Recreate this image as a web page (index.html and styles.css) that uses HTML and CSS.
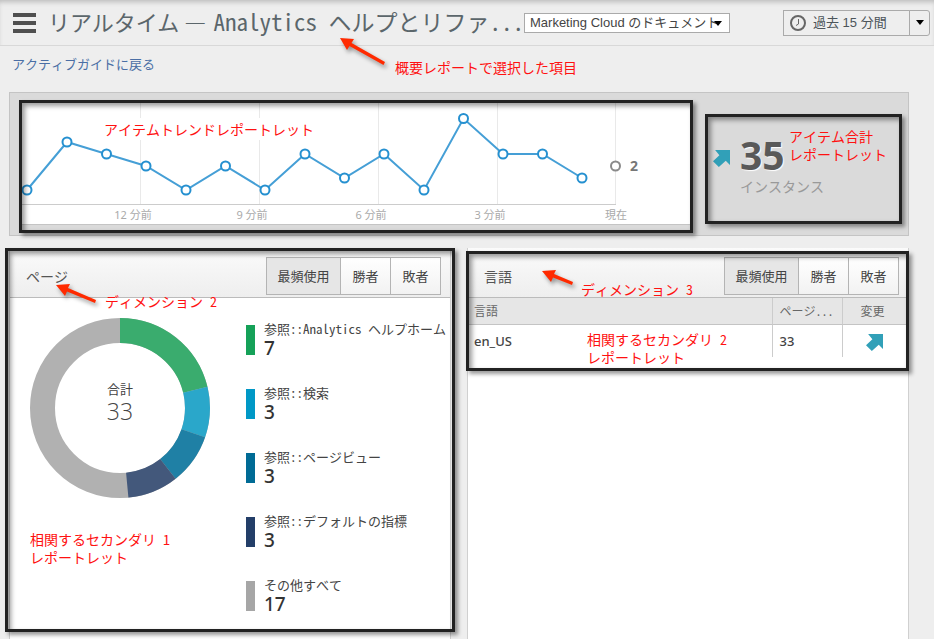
FILE: index.html
```html
<!DOCTYPE html>
<html lang="ja">
<head>
<meta charset="utf-8">
<title>リアルタイム — Analytics</title>
<link rel="stylesheet" href="styles.css">
</head>
<body>
<svg class="defs" aria-hidden="true">
  <symbol id="up" viewBox="0 0 16 16"><path d="M2 0H16V14L12 10 5.500 16 0 10.500 6 5Z"/></symbol>
</svg>
<header class="topbar">
  <button class="menu" type="button" aria-label="メニュー"><span></span><span></span><span></span></button>
  <h1 class="title"><span class="section">リアルタイム —</span><span class="item">Analytics ヘルプとリファ...</span></h1>
  <div class="picker">
    <select aria-label="レポート"><option>Marketing Cloud のドキュメント</option></select>
    <svg class="caret" viewBox="0 0 8 5"><path d="M0 0H8L4 5Z"/></svg>
  </div>
  <div class="period">
    <button class="period-main" type="button">
      <svg class="clock" viewBox="0 0 16 16"><circle cx="8" cy="8" r="7"/><path d="M8.500 4V9L6 10.500"/></svg>過去 15 分間
    </button>
    <button class="period-more" type="button" aria-label="期間を選択"><svg viewBox="0 0 8 5"><path d="M0 0H8L4 5Z"/></svg></button>
  </div>
  <svg class="pointer pointer-title" viewBox="0 0 46 28"><path d="M0 0L14 1 11.500 5 45 24 43.500 27 9.500 8 7 12Z"/></svg>
  <p class="note note-title">概要レポートで選択した項目</p>
</header>
<nav class="back"><a href="#">アクティブガイドに戻る</a></nav>
<main>
  <section class="summary">
    <div class="trend">
      <svg class="chart" viewBox="0 0 668 121" role="img" aria-label="アイテムトレンド">
        <path class="grid" d="M118.500 0V101M237.500 0V101M356.500 0V101M475.500 0V101M593.500 0V101"/>
        <path class="axis" d="M0 101.500H594"/>
        <path class="line" d="M5 87L45 39 84.500 51 124 63 164 87 203.500 63 243 87 283 51 322.500 75 362 51 402 87 441.500 15.500 481 51 520.500 51 560 75"/>
        <g class="dots">
          <circle cx="5" cy="87" r="4.500"/><circle cx="45" cy="39" r="4.500"/><circle cx="84.500" cy="51" r="4.500"/><circle cx="124" cy="63" r="4.500"/><circle cx="164" cy="87" r="4.500"/><circle cx="203.500" cy="63" r="4.500"/><circle cx="243" cy="87" r="4.500"/><circle cx="283" cy="51" r="4.500"/><circle cx="322.500" cy="75" r="4.500"/><circle cx="362" cy="51" r="4.500"/><circle cx="402" cy="87" r="4.500"/><circle cx="441.500" cy="15.500" r="4.500"/><circle cx="481" cy="51" r="4.500"/><circle cx="520.500" cy="51" r="4.500"/><circle cx="560" cy="75" r="4.500"/>
          <circle class="now" cx="593.500" cy="63" r="4.500"/>
        </g>
        <text class="now-value" x="608" y="68">2</text>
        <g class="ticks"><text x="111" y="116">12 分前</text><text x="230" y="116">9 分前</text><text x="349" y="116">6 分前</text><text x="468" y="116">3 分前</text><text x="594" y="116">現在</text></g>
      </svg>
      <div class="frame"></div>
      <p class="note note-trend">アイテムトレンドレポートレット</p>
    </div>
    <div class="total">
      <svg class="up"><use href="#up"/></svg>
      <div><strong>35</strong><span>インスタンス</span></div>
      <div class="frame"></div>
      <p class="note note-total">アイテム合計<br>レポートレット</p>
    </div>
  </section>
  <div class="cards">
    <section class="card pages">
      <header class="card-head">
        <h2>ページ</h2>
        <div class="tabs"><button class="on" type="button">最頻使用</button><button type="button">勝者</button><button type="button">敗者</button></div>
      </header>
      <div class="breakdown">
        <div class="donut">
          <svg viewBox="0 0 180 180" role="img" aria-label="ページの内訳">
            <g transform="rotate(-90 90 90)">
              <circle class="s-rest" cx="90" cy="90" r="77.500"/>
              <circle class="s1" cx="90" cy="90" r="77.500" pathLength="33" stroke-dasharray="7 26"/>
              <circle class="s2" cx="90" cy="90" r="77.500" pathLength="33" stroke-dasharray="3 30" stroke-dashoffset="-7"/>
              <circle class="s3" cx="90" cy="90" r="77.500" pathLength="33" stroke-dasharray="3 30" stroke-dashoffset="-10"/>
              <circle class="s4" cx="90" cy="90" r="77.500" pathLength="33" stroke-dasharray="3 30" stroke-dashoffset="-13"/>
            </g>
          </svg>
          <div class="sum"><span>合計</span><b>33</b></div>
        </div>
        <ul class="legend">
          <li class="k1"><span>参照::Analytics ヘルプホーム</span><b>7</b></li>
          <li class="k2"><span>参照::検索</span><b>3</b></li>
          <li class="k3"><span>参照::ページビュー</span><b>3</b></li>
          <li class="k4"><span>参照::デフォルトの指標</span><b>3</b></li>
          <li class="k5"><span>その他すべて</span><b>17</b></li>
        </ul>
      </div>
      <div class="frame"></div>
      <svg class="pointer pointer-pages" viewBox="0 0 41 20"><path d="M0 1L14 0 12 4 40 16 39 19 11 7.500 9 12Z"/></svg>
      <p class="note note-dim2">ディメンション 2</p>
      <p class="note note-sec1">相関するセカンダリ 1<br>レポートレット</p>
    </section>
    <section class="card languages">
      <header class="card-head">
        <h2>言語</h2>
        <div class="tabs"><button class="on" type="button">最頻使用</button><button type="button">勝者</button><button type="button">敗者</button></div>
      </header>
      <table>
        <thead><tr><th>言語</th><th>ページ...</th><th>変更</th></tr></thead>
        <tbody><tr><td>en_US</td><td>33</td><td><svg class="up" role="img" aria-label="増加"><use href="#up"/></svg></td></tr></tbody>
      </table>
      <div class="frame"></div>
      <svg class="pointer pointer-lang" viewBox="0 0 32 16"><path d="M0 1L14 0 12 4 31 12 30 15 11 7.500 9 12Z"/></svg>
      <p class="note note-dim3">ディメンション 3</p>
      <p class="note note-sec2">相関するセカンダリ 2<br>レポートレット</p>
    </section>
  </div>
</main>
</body>
</html>
```
FILE: styles.css
```css
* { box-sizing: border-box; }
body {
  margin: 0;
  min-height: 100vh;
  display: flex;
  flex-direction: column;
  background: #eee;
  color: #444;
  font: 13px/18px "Noto Sans Mono CJK JP", "Noto Sans CJK JP", sans-serif;
}
h1, h2, p, ul { margin: 0; padding: 0; font-weight: 400; }
button, select { font: inherit; color: inherit; margin: 0; }
svg { display: block; }
.defs { position: absolute; width: 0; height: 0; }

.topbar {
  position: relative;
  display: flex;
  align-items: center;
  height: 46px;
  padding: 0 4px 0 13px;
  border-bottom: 1px solid #d8d8d8;
  box-shadow: inset 0 4px 5px -2px #bbb;
}
.menu {
  display: grid;
  gap: 4px;
  width: 23px;
  padding: 0;
  border: 0;
  background: none;
}
.menu span { height: 4px; background: #4f4f4f; }
.title {
  display: flex;
  width: 476px;
  margin-left: 12px;
  padding-bottom: 4px;
  color: #5b666b;
  font-size: 23px;
  line-height: 32px;
  white-space: nowrap;
}
.section {
  width: 167px;
  font-family: "Noto Sans CJK JP", sans-serif;
  font-size: 22px;
}
.picker { position: relative; width: 206px; }
.picker select {
  display: block;
  width: 100%;
  height: 20px;
  padding: 0 5px;
  appearance: none;
  border: 1px solid #aaa;
  border-radius: 0;
  background: #fff;
  font: 13px/18px "Liberation Sans", "Noto Sans CJK JP", sans-serif;
}
.caret { position: absolute; right: 8px; top: 8px; width: 8px; height: 5px; }
.period { display: flex; height: 26px; margin-left: auto; }
.period button {
  display: flex;
  align-items: center;
  border: 1px solid #aaa;
  background: #eee;
  padding: 0 6px;
}
.period .period-main {
  width: 127px;
  gap: 7px;
  color: #4c555a;
  font-family: "Liberation Sans", "Noto Sans CJK JP", sans-serif;
}
.period .period-more { width: 21px; margin-left: -1px; border-radius: 0 3px 3px 0; }
.period-more svg { width: 8px; height: 5px; flex: none; }
.clock { width: 16px; height: 16px; fill: none; stroke: #666; stroke-width: 2; }
.clock path { stroke-width: 1; }

.back { height: 46px; padding: 9px 12px; }
.back a { color: #4a6ea5; text-decoration: none; font-weight: 500; }

main { flex: 1; display: flex; flex-direction: column; }
.summary {
  display: grid;
  grid-template-columns: 668fr 218fr;
  margin: 0 25px 0 9px;
  padding: 10px 0 10px 12px;
  border: 1px solid #c4c4c4;
  background: #dadada;
}
.trend { position: relative; background: #fff; border-bottom: 1px solid #c4c4c4; }
.chart { width: 100%; height: auto; }
.chart path { fill: none; }
.grid { stroke: #e9e9e9; }
.axis { stroke: #ccc; }
.line { stroke: #459fd6; stroke-width: 2; }
.dots { fill: #fff; stroke: #2590d0; stroke-width: 2; }
.dots .now { stroke: #8a8a8a; }
.now-value { font: 700 14px "Noto Sans", sans-serif; fill: #777; }
.ticks { font: 11px "Noto Sans", "Noto Sans CJK JP", sans-serif; fill: #aaa; text-anchor: middle; }
.total { position: relative; display: flex; gap: 10px; padding: 32px 0 0 23px; }
.up { width: 17px; height: 17px; fill: #31a0b8; }
.total > .up { margin-top: 15px; }
.total strong {
  display: block;
  color: #595959;
  font: 700 39px/40px "Noto Sans", sans-serif;
  text-shadow: 1px 1px 1px #fff;
}
.total span { display: block; margin-top: 2px; font-size: 14px; color: #999; }

.frame {
  position: absolute;
  border: 3px solid #222;
  box-shadow: 3px 3px 4px rgba(0, 0, 0, .4), inset 3px 3px 5px rgba(0, 0, 0, .4);
  pointer-events: none;
}
.trend .frame { inset: -3px -3px -9px -3px; }
.total .frame { inset: 11px 6px 1px 15px; }
.pages .frame { inset: 0 -5px 7px -5px; }
.languages .frame { inset: 3px -1px auto -2px; height: 120px; }

.cards {
  flex: 1;
  display: grid;
  grid-template-columns: 442fr 442fr;
  gap: 16px;
  margin: 12px 25px 0 9px;
}
.card {
  position: relative;
  background: #fff;
  border: solid #d0d0d0;
  border-width: 0 1px;
}
.card-head {
  display: flex;
  justify-content: space-between;
  align-items: center;
  height: 50px;
  padding: 6px 9px 0 16px;
  border-bottom: 1px solid #bbb;
  background: linear-gradient(#fbfbfb, #eee);
}
.card-head h2 { font-size: 14px; font-weight: 500; color: #555; }
.tabs { display: flex; }
.tabs button {
  width: 51px;
  height: 38px;
  padding: 0;
  margin-left: -1px;
  border: 1px solid #b4b4b4;
  background: linear-gradient(#fff, #f2f2f2);
}
.tabs .on { width: 75px; background: #e6e6e6; }

.breakdown { display: flex; padding: 20px 0 0 20px; }
.donut { position: relative; width: 180px; height: 180px; flex: none; }
.donut circle { fill: none; stroke-width: 25; }
.s-rest { stroke: #b1b1b1; }
.s1 { stroke: #3aac6e; }
.s2 { stroke: #2aa7ca; }
.s3 { stroke: #1f80a5; }
.s4 { stroke: #43587b; }
.sum {
  position: absolute;
  inset: 0;
  display: flex;
  flex-direction: column;
  align-items: center;
  justify-content: center;
  padding-bottom: 12px;
}
.sum span { font-weight: 500; }
.sum b { font: 300 23px/26px "Open Sans", sans-serif; }
.legend { list-style: none; margin-left: 36px; display: grid; gap: 24px; }
.legend li { position: relative; height: 40px; padding-left: 18px; white-space: nowrap; }
.legend li::before {
  content: "";
  position: absolute;
  left: 0;
  top: 7px;
  width: 9px;
  height: 30px;
  background: var(--key);
}
.legend span, .legend b { display: block; }
.legend span { line-height: 21px; }
.legend b { font: 500 19px/19px "Noto Sans", sans-serif; color: #333; }
.k1 { --key: #15a158; }
.k2 { --key: #0098c6; }
.k3 { --key: #006b95; }
.k4 { --key: #233e68; }
.k5 { --key: #a6a6a6; }

table { width: 100%; table-layout: fixed; border-collapse: separate; border-spacing: 0; }
th, td { padding: 0 7px; text-align: left; border-left: 1px solid #ccc; }
th:first-child, td:first-child { width: 69%; padding-left: 6px; border-left: 0; }
th:last-child, td:last-child { width: 15%; text-align: center; }
th:last-child { padding-right: 13px; }
td:last-child { padding-right: 9px; }
th { height: 27px; font-size: 12px; font-weight: 500; background: #e6e6e6; border-bottom: 1px solid #c4c4c4; color: #666; white-space: nowrap; }
td { height: 32px; font: 500 13px/18px "Noto Sans", sans-serif; }
td .up { margin: 3px auto 0; }

.note { position: absolute; color: #f11; font-size: 14px; font-weight: 500; line-height: 18px; white-space: nowrap; }
.note-title { left: 395px; top: 58px; }
.note-trend { left: 82px; top: 15px; line-height: 22px; background: #fff; }
.note-total { left: 99px; top: 24px; }
.note-dim2 { left: 95px; top: 44px; }
.note-sec1 { left: 20px; top: 282px; }
.note-dim3 { left: 113px; top: 32px; }
.note-sec2 { left: 119px; top: 82px; }
.pointer { position: absolute; fill: #ff2a00; filter: drop-shadow(2px 3px 2px rgba(0, 0, 0, .4)); }
.pointer-title { left: 340px; top: 38px; width: 46px; height: 28px; }
.pointer-pages { left: 46px; top: 36px; width: 41px; height: 20px; }
.pointer-lang { left: 74px; top: 22px; width: 32px; height: 16px; }
```
